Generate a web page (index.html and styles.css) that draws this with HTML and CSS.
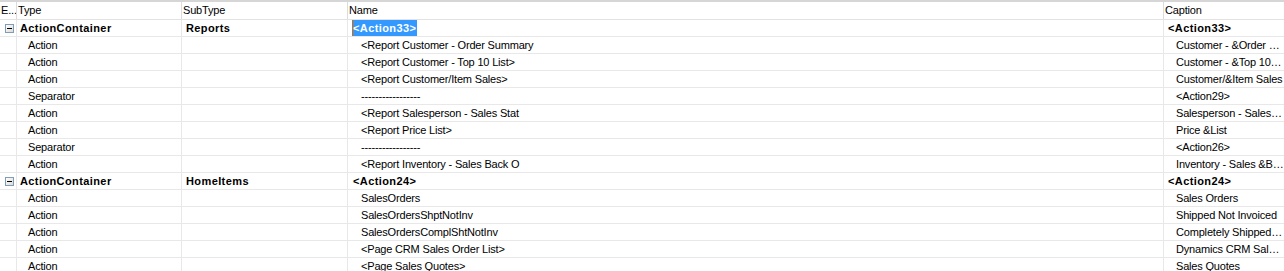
FILE: index.html
```html
<!DOCTYPE html>
<html lang="en">
<head>
    <meta charset="UTF-8">
    <title>Actions</title>
    <link rel="stylesheet" href="styles.css">
</head>
<body>
    <div class="grid">
        <div class="row head">
            <div class="cell">E...</div>
            <div class="cell">Type</div>
            <div class="cell">SubType</div>
            <div class="cell">Name</div>
            <div class="cell">Caption</div>
        </div>

        <div class="row group">
            <div class="cell exp"><span class="box"></span></div>
            <div class="cell">ActionContainer</div>
            <div class="cell">Reports</div>
            <div class="cell"><span class="sel">&lt;Action33&gt;</span></div>
            <div class="cell">&lt;Action33&gt;</div>
        </div>
        <div class="row">
            <div class="cell"></div>
            <div class="cell">Action</div>
            <div class="cell"></div>
            <div class="cell">&lt;Report Customer - Order Summary</div>
            <div class="cell">Customer - &amp;Order Summary</div>
        </div>
        <div class="row">
            <div class="cell"></div>
            <div class="cell">Action</div>
            <div class="cell"></div>
            <div class="cell">&lt;Report Customer - Top 10 List&gt;</div>
            <div class="cell">Customer - &amp;Top 10 List</div>
        </div>
        <div class="row">
            <div class="cell"></div>
            <div class="cell">Action</div>
            <div class="cell"></div>
            <div class="cell">&lt;Report Customer/Item Sales&gt;</div>
            <div class="cell">Customer/&amp;Item Sales</div>
        </div>
        <div class="row">
            <div class="cell"></div>
            <div class="cell">Separator</div>
            <div class="cell"></div>
            <div class="cell">-----------------</div>
            <div class="cell">&lt;Action29&gt;</div>
        </div>
        <div class="row">
            <div class="cell"></div>
            <div class="cell">Action</div>
            <div class="cell"></div>
            <div class="cell">&lt;Report Salesperson - Sales Stat</div>
            <div class="cell">Salesperson - Sales Statistics</div>
        </div>
        <div class="row">
            <div class="cell"></div>
            <div class="cell">Action</div>
            <div class="cell"></div>
            <div class="cell">&lt;Report Price List&gt;</div>
            <div class="cell">Price &amp;List</div>
        </div>
        <div class="row">
            <div class="cell"></div>
            <div class="cell">Separator</div>
            <div class="cell"></div>
            <div class="cell">-----------------</div>
            <div class="cell">&lt;Action26&gt;</div>
        </div>
        <div class="row">
            <div class="cell"></div>
            <div class="cell">Action</div>
            <div class="cell"></div>
            <div class="cell">&lt;Report Inventory - Sales Back O</div>
            <div class="cell">Inventory - Sales &amp;Back Orders</div>
        </div>

        <div class="row group">
            <div class="cell exp"><span class="box"></span></div>
            <div class="cell">ActionContainer</div>
            <div class="cell">HomeItems</div>
            <div class="cell">&lt;Action24&gt;</div>
            <div class="cell">&lt;Action24&gt;</div>
        </div>
        <div class="row">
            <div class="cell"></div>
            <div class="cell">Action</div>
            <div class="cell"></div>
            <div class="cell">SalesOrders</div>
            <div class="cell">Sales Orders</div>
        </div>
        <div class="row">
            <div class="cell"></div>
            <div class="cell">Action</div>
            <div class="cell"></div>
            <div class="cell">SalesOrdersShptNotInv</div>
            <div class="cell">Shipped Not Invoiced</div>
        </div>
        <div class="row">
            <div class="cell"></div>
            <div class="cell">Action</div>
            <div class="cell"></div>
            <div class="cell">SalesOrdersComplShtNotInv</div>
            <div class="cell">Completely Shipped Not Invoiced</div>
        </div>
        <div class="row">
            <div class="cell"></div>
            <div class="cell">Action</div>
            <div class="cell"></div>
            <div class="cell">&lt;Page CRM Sales Order List&gt;</div>
            <div class="cell">Dynamics CRM Sales Orders</div>
        </div>
        <div class="row">
            <div class="cell"></div>
            <div class="cell">Action</div>
            <div class="cell"></div>
            <div class="cell">&lt;Page Sales Quotes&gt;</div>
            <div class="cell">Sales Quotes</div>
        </div>
    </div>
</body>
</html>
```

FILE: styles.css
```css
body {
    margin: 0;
    background: white;
    font-family: "Liberation Sans", Arial, sans-serif;
    font-size: 11px;
    letter-spacing: -0.18px;
    color: #000;
    overflow: hidden;
}
.grid {
    border-top: 2px solid #d6d6d6;
}
.row {
    display: grid;
    grid-template-columns: 17px 165px 166px 816px 120px;
    height: 16px;
    border-bottom: 1px solid #e8e8e8;
}
.cell {
    display: flex;
    align-items: center;
    white-space: nowrap;
    overflow: hidden;
    border-right: 1px solid #e8e8e8;
    line-height: 16px;
}
.cell:last-child {
    display: block;
    border-right: none;
    text-overflow: ellipsis;
}

/* header */
.head {
    height: 17px;
    border-bottom: 1px solid #e2e2e2;
}
.head .cell {
    line-height: 17px;
    border-right-color: #dcdcdc;
}

/* child rows */
.row .cell:nth-child(2) { padding-left: 11px; }
.row .cell:nth-child(3) { padding-left: 4px; }
.row .cell:nth-child(4) { padding-left: 13px; }
.row .cell:nth-child(5) { padding-left: 12px; }

/* container rows */
.group {
    font-weight: bold;
    letter-spacing: 0.4px;
}
.group .cell:nth-child(2) { padding-left: 3px; }
.group .cell:nth-child(4) { padding-left: 5px; }
.group .cell:nth-child(5) { padding-left: 4px; }

.head .cell:nth-child(n) { padding-left: 1px; }

.exp {
    padding-left: 5px;
}
.box {
    position: relative;
    width: 7px;
    height: 7px;
    border: 1px solid #7f9db9;
    background: linear-gradient(135deg, #ffffff, #dcdad5);
}
.box::after {
    content: "";
    position: absolute;
    left: 1px;
    top: 3px;
    width: 5px;
    height: 1px;
    background: #000;
}

.sel {
    margin-left: -1px;
    padding-right: 1px;
    background: #3399ff;
    color: white;
    border-left: 1px solid #d96a00;
    line-height: 16px;
}
```
